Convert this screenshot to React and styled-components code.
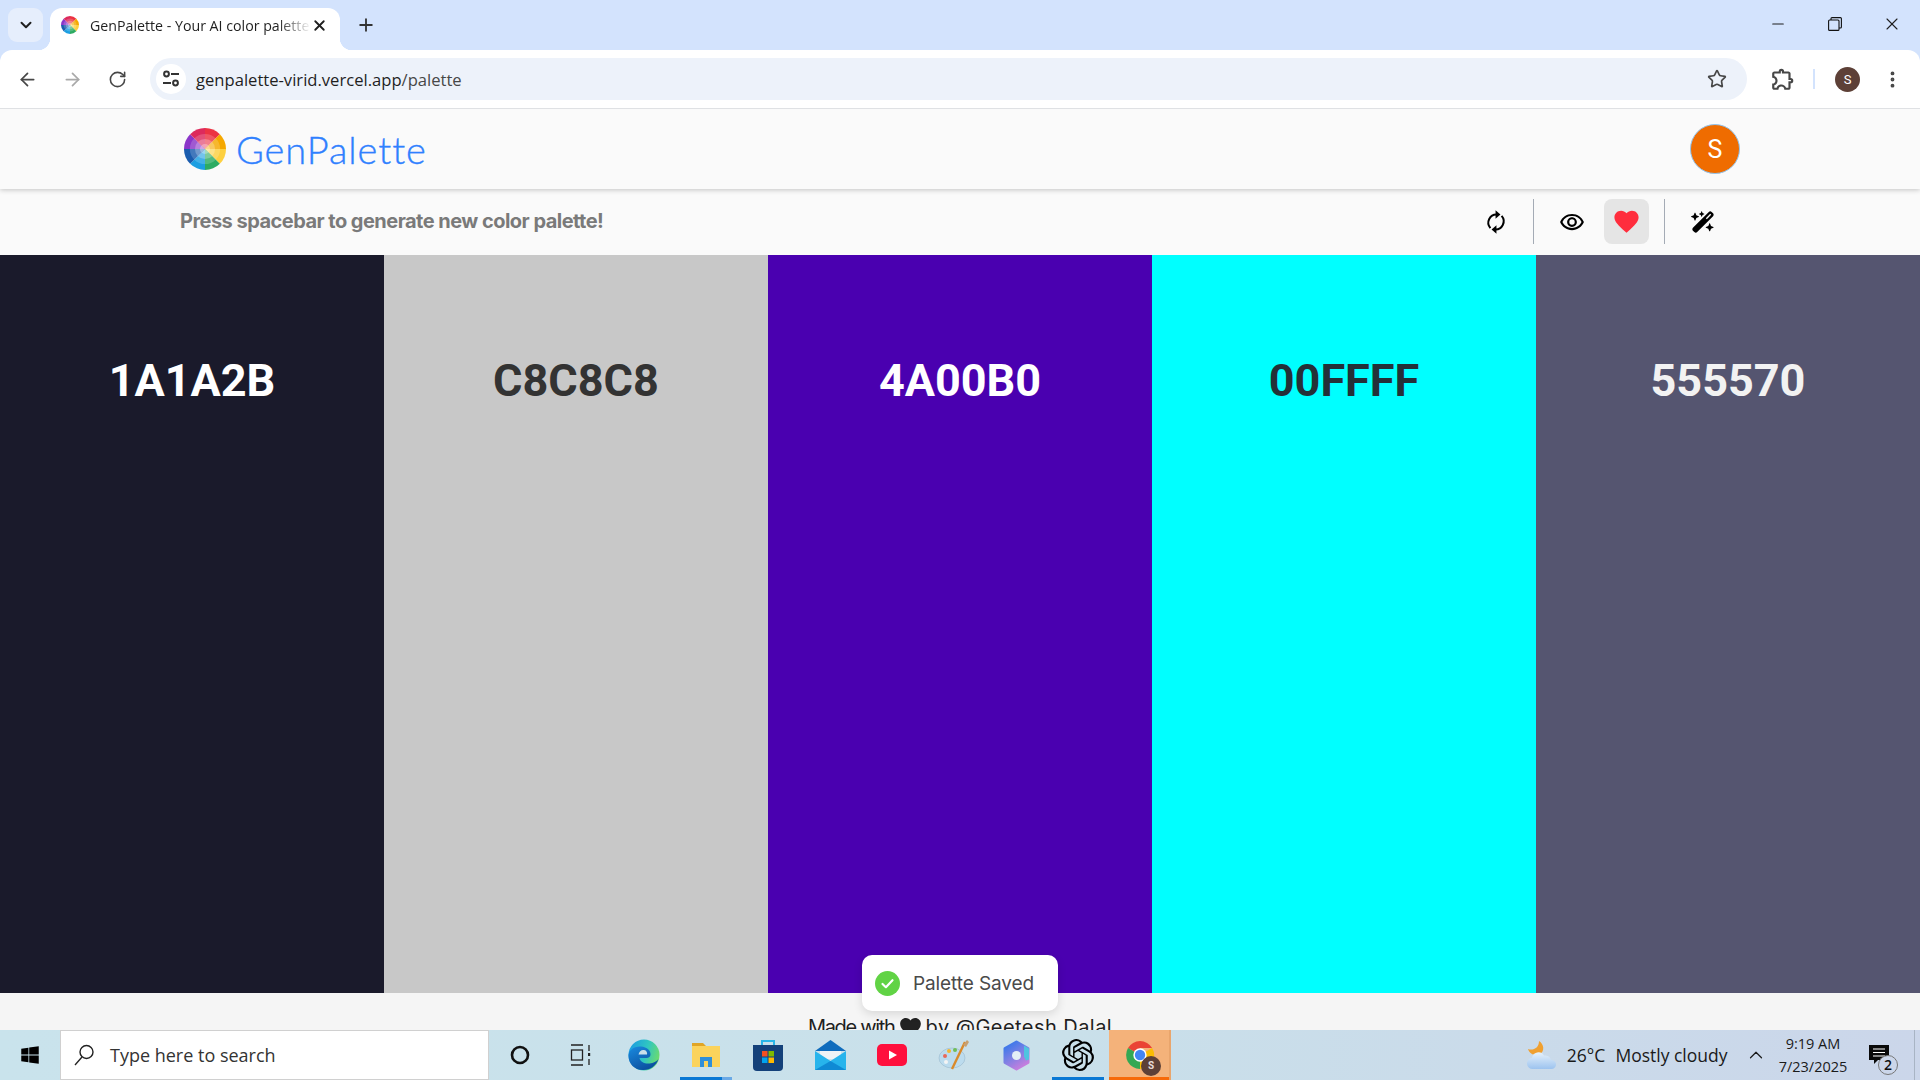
import styled, { createGlobalStyle } from "styled-components";
import { ArrowLeft, ArrowRight, RotateCw, ChevronDown, Plus, X, Minus, Star, EllipsisVertical, ChevronUp } from "lucide-react";
import { MdOutlineExtension, MdFavorite, MdOutlineRemoveRedEye } from "react-icons/md";
import { FaWandMagicSparkles, FaWindows } from "react-icons/fa6";
import { SiOpenai } from "react-icons/si";

const GlobalStyle = createGlobalStyle`
  html, body {
    margin: 0;
    height: 100%;
    overflow: hidden;
    background: #f5f5f5;
    font-family: "Inter", "Liberation Sans", sans-serif;
  }
  #root { height: 100%; }
`;

const palette = [
  { hex: "1A1A2B", text: "#ffffff" },
  { hex: "C8C8C8", text: "#333333" },
  { hex: "4A00B0", text: "#ffffff" },
  { hex: "00FFFF", text: "#243038" },
  { hex: "555570", text: "#f2f2f2" },
];

const wheelColors = ["#ec3342", "#f5a800", "#fdd040", "#2dab62", "#1c9fe2", "#1a5cae", "#8b35c9", "#dd2a5c"];

const wedge = (r, i) => {
  const a0 = (i * 45 - 90) * (Math.PI / 180);
  const a1 = ((i + 1) * 45 - 90) * (Math.PI / 180);
  const p = (a) => `${(50 + r * Math.cos(a)).toFixed(2)} ${(50 + r * Math.sin(a)).toFixed(2)}`;
  return `M50 50L${p(a0)}A${r} ${r} 0 0 1 ${p(a1)}Z`;
};

const ColorWheel = ({ size }) => (
  <svg width={size} height={size} viewBox="0 0 100 100">
    {wheelColors.map((c, i) => (
      <g key={c}>
        <path d={wedge(50, i)} fill={c} />
        <path d={wedge(36, i)} fill="#ffffff" opacity="0.18" />
        <path d={wedge(24, i)} fill="#ffffff" opacity="0.25" />
        <path d={wedge(12, i)} fill="#ffffff" opacity="0.3" />
      </g>
    ))}
  </svg>
);

const Screen = styled.div`
  height: 100vh;
  display: flex;
  flex-direction: column;
  overflow: hidden;
`;

/* browser chrome */
const BrowserTop = styled.div`
  flex: none;
  background: #d3e3fd;
`;

const TabStrip = styled.div`
  height: 50px;
  display: flex;
  align-items: flex-end;
  padding-left: 8px;
`;

const TabSearch = styled.div`
  width: 35px;
  height: 34px;
  margin-bottom: 8px;
  border-radius: 9px;
  background: #e6eefc;
  color: #1f1f1f;
  display: flex;
  align-items: center;
  justify-content: center;
`;

const Tab = styled.div`
  width: 290px;
  height: 42px;
  margin-left: 7px;
  background: #ffffff;
  border-radius: 12px 12px 0 0;
  display: flex;
  align-items: center;
  padding: 0 12px 8px 11px;
  box-sizing: border-box;
  color: #1f1f1f;
  position: relative;

  &::before,
  &::after {
    content: "";
    position: absolute;
    bottom: 0;
    width: 12px;
    height: 12px;
  }
  &::before {
    left: -12px;
    background: radial-gradient(circle at 0 0, transparent 12px, #ffffff 12.5px);
  }
  &::after {
    right: -12px;
    background: radial-gradient(circle at 100% 0, transparent 12px, #ffffff 12.5px);
  }
`;

const TabTitle = styled.span`
  flex: 1;
  margin-left: 11px;
  font: 14.2px "Open Sans", sans-serif;
  white-space: nowrap;
  overflow: hidden;
  -webkit-mask-image: linear-gradient(to right, #000 85%, transparent);
  mask-image: linear-gradient(to right, #000 85%, transparent);
`;

const NewTab = styled.div`
  margin: 0 0 15px 16px;
  color: #333;
  display: flex;
`;

const WindowButtons = styled.div`
  margin-left: auto;
  align-self: flex-start;
  display: flex;
  height: 48px;
  align-items: center;
  color: #1f1f1f;
`;

const WindowButton = styled.div`
  width: 57px;
  display: flex;
  justify-content: center;
  align-items: center;
`;

const BrowserBar = styled.div`
  height: 58px;
  background: #ffffff;
  border-bottom: 1px solid #dfe1e4;
  border-radius: 12px 12px 0 0;
  display: flex;
  align-items: center;
  color: #474747;
  padding-left: 5px;
`;

const NavButton = styled.div`
  width: 45px;
  display: flex;
  justify-content: center;
  color: ${({ $dim }) => ($dim ? "#a9a9a9" : "#474747")};
`;

const AddressBar = styled.div`
  width: 1597px;
  height: 42px;
  margin-left: 10px;
  border-radius: 21px;
  background: #edf2fa;
  display: flex;
  align-items: center;
  padding: 0 20px 0 6px;
  box-sizing: border-box;
`;

const SiteInfo = styled.div`
  width: 30px;
  height: 30px;
  border-radius: 50%;
  background: #ffffff;
  display: flex;
  align-items: center;
  justify-content: center;
`;

const Url = styled.div`
  flex: 1;
  margin-left: 10px;
  font: 16.6px "Open Sans", sans-serif;
  color: #1f1f1f;
  span { color: #474747; }
`;

const BarIcons = styled.div`
  display: flex;
  align-items: center;
  flex: 1;
  padding-left: 23px;
`;

const BarSeparator = styled.div`
  width: 2px;
  height: 20px;
  background: #d3e3fd;
  margin: 0 20px 0 17px;
`;

const ChromeAvatar = styled.div`
  width: 25px;
  height: 25px;
  border-radius: 50%;
  background: #5d4037;
  color: #fff;
  font: 13px "Roboto", sans-serif;
  display: flex;
  align-items: center;
  justify-content: center;
  margin-right: 10px;
`;

/* page */
const Page = styled.main`
  flex: 1;
  min-height: 0;
  display: flex;
  flex-direction: column;
  position: relative;
  overflow: hidden;
`;

const Header = styled.header`
  height: 80px;
  flex: none;
  background: #fafafa;
  box-shadow: 0 1px 5px rgba(0, 0, 0, 0.22);
  display: flex;
  align-items: center;
  justify-content: space-between;
  padding: 0 180px 0 184px;
  position: relative;
  z-index: 1;
`;

const Brand = styled.div`
  display: flex;
  align-items: center;
  gap: 10px;
`;

const BrandName = styled.span`
  font: 300 38px "Lato", sans-serif;
  -webkit-text-stroke: 0.35px #2f80ff;
  color: #2f80ff;
  letter-spacing: 0.9px;
`;

const UserBadge = styled.div`
  width: 50px;
  height: 50px;
  box-sizing: border-box;
  border-radius: 50%;
  background: #ef6c00;
  border: 1px solid #90c4f0;
  color: #ffffff;
  font: 25px "Roboto", sans-serif;
  display: flex;
  align-items: center;
  justify-content: center;
`;

const ToolRow = styled.div`
  height: 66px;
  flex: none;
  background: #fafafa;
  display: flex;
  align-items: center;
  justify-content: space-between;
  padding: 0 195px 0 180px;
`;

const Hint = styled.p`
  margin: 0 0 2px;
  font-size: 20px;
  font-weight: 700;
  letter-spacing: -0.53px;
  color: #7a7a7a;
`;

const Tools = styled.div`
  display: flex;
  align-items: center;
  margin-bottom: 1px;
`;

const ToolButton = styled.button`
  width: 45px;
  height: 45px;
  padding: 0;
  border: 0;
  border-radius: 8px;
  margin-left: ${({ $gap }) => $gap || 0}px;
  background: ${({ $active }) => ($active ? "#e5e5e5" : "transparent")};
  color: #000;
  display: flex;
  align-items: center;
  justify-content: center;
`;

const ToolDivider = styled.div`
  width: 1px;
  height: 45px;
  margin: 0 15px;
  background: #a4abb5;
`;

const Columns = styled.section`
  height: 738px;
  flex: none;
  display: flex;
`;

const Column = styled.div`
  flex: 1;
  background: ${({ $bg }) => $bg};
  color: ${({ $fg }) => $fg};
  font: 700 45px/52px "Roboto", sans-serif;
  text-align: center;
  padding-top: 100px;
  box-sizing: border-box;
`;

const Footer = styled.footer`
  flex: 1;
  background: #f5f5f5;
  padding-top: 20px;
  text-align: center;
  font-size: 20px;
  line-height: 28px;
  color: #1f1f1f;
  svg { vertical-align: -3px; margin: 0 5px; }
`;

const FooterText = styled.span`
  letter-spacing: ${({ $spacing }) => $spacing}px;
`;

const Toast = styled.div`
  position: absolute;
  left: 862px;
  top: 846px;
  width: 196px;
  height: 56px;
  box-sizing: border-box;
  padding-left: 13px;
  display: flex;
  align-items: center;
  gap: 13px;
  background: #ffffff;
  border-radius: 10px;
  box-shadow: 0 3px 10px rgba(0, 0, 0, 0.12);
  font-size: 19px;
  letter-spacing: -0.1px;
  color: #4a4a4a;
`;

/* windows taskbar */
const Taskbar = styled.div`
  height: 50px;
  flex: none;
  display: flex;
  align-items: stretch;
  background: linear-gradient(to right, #c9e3ec, #c9e0ea 55%, #cbd6ea);
`;

const StartButton = styled.div`
  width: 60px;
  display: flex;
  align-items: center;
  justify-content: center;
`;

const SearchBox = styled.div`
  width: 429px;
  box-sizing: border-box;
  background: #ffffff;
  border: 1px solid #d0d0d0;
  display: flex;
  align-items: center;
  padding-left: 13px;
  gap: 16px;
  font: 18px "Open Sans", sans-serif;
  color: #333;
`;

const TaskSlot = styled.div`
  width: 62px;
  display: flex;
  align-items: center;
  justify-content: center;
  position: relative;
  background: ${({ $current }) => ($current ? "#f4b27a" : "transparent")};
  border-right: ${({ $current }) => ($current ? "2px solid #e9a56c" : "0")};
  box-sizing: border-box;
  &::after {
    content: "";
    display: ${({ $line }) => ($line ? "block" : "none")};
    position: absolute;
    left: ${({ $current }) => ($current ? 0 : 5)}px;
    right: ${({ $current }) => ($current ? 0 : 5)}px;
    bottom: 0;
    height: 3px;
    background: ${({ $line }) => $line};
  }
`;

const Tray = styled.div`
  margin-left: auto;
  margin-right: 5px;
  display: flex;
  align-items: center;
  padding-right: 5px;
  font: 17.5px "Open Sans", sans-serif;
  color: #1a1a1a;
  border-right: 1px solid #a8b4c4;
`;

const TrayText = styled.span`
  margin-left: ${({ $gap }) => $gap}px;
  white-space: nowrap;
`;

const Clock = styled.div`
  width: 90px;
  margin-left: 1px;
  text-align: center;
  font-size: 14.5px;
  line-height: 23px;
`;

const Notify = styled.div`
  width: 40px;
  height: 36px;
  margin-left: 11px;
  padding-top: 8px;
  box-sizing: border-box;
  position: relative;
`;

const NotifyCount = styled.span`
  position: absolute;
  left: 9px;
  top: 18px;
  width: 20px;
  height: 20px;
  box-sizing: border-box;
  border-radius: 50%;
  background: #cbd6ea;
  border: 1px solid #777;
  font: 600 14px/18px "Open Sans", sans-serif;
  text-align: center;
  color: #111;
`;

const TuneIcon = () => (
  <svg width="20" height="20" viewBox="0 0 20 20" fill="none" stroke="#333" strokeWidth="2">
    <circle cx="5.5" cy="5" r="2.4" />
    <path d="M10 5h8M2 14h8" />
    <circle cx="14.5" cy="14" r="2.4" />
  </svg>
);

const RestoreIcon = () => (
  <svg width="14" height="14" viewBox="0 0 14 14" fill="none" stroke="#111" strokeWidth="1.1">
    <rect x="0.6" y="3" width="10.4" height="10.4" rx="1" />
    <path d="M3 3V1.6a1 1 0 0 1 1-1h8.4a1 1 0 0 1 1 1V10a1 1 0 0 1-1 1H11" />
  </svg>
);

const SyncIcon = () => (
  <svg width="28" height="28" viewBox="0 0 24 24" fill="none" stroke="#000" strokeWidth="1.7">
    <path d="M13 5.6A7 7 0 0 0 7.2 17.2" />
    <path d="M11 18.4A7 7 0 0 0 16.8 6.800" />
    <path d="M11.6 2l4.2 3.600-4.200 3.600z" fill="#000" stroke="none" />
    <path d="M12.4 22l-4.200-3.600 4.200-3.600z" fill="#000" stroke="none" />
  </svg>
);

const CheckCircle = () => (
  <svg width="25" height="25" viewBox="0 0 25 25">
    <circle cx="12.5" cy="12.5" r="12.5" fill="#61d345" />
    <path d="M7.5 13l3.4 3.2 6.6-7" fill="none" stroke="#fff" strokeWidth="2.2" strokeLinecap="round" strokeLinejoin="round" />
  </svg>
);

const HeartBlack = () => (
  <svg width="21" height="19" viewBox="0 0 24 22" fill="#222">
    <path d="M12 21.5C5 16 0 12 0 6.8 0 3 3 0 6.6 0 9 0 11 1.2 12 3c1-1.8 3-3 5.4-3C21 0 24 3 24 6.8 24 12 19 16 12 21.5z" />
  </svg>
);

const SearchGlass = () => (
  <svg width="20" height="22" viewBox="0 0 20 22" fill="none" stroke="#222" strokeWidth="1.4">
    <circle cx="12.5" cy="8" r="6.5" />
    <path d="M8 13L1 21" />
  </svg>
);

const TaskViewIcon = () => (
  <svg width="24" height="24" viewBox="0 0 24 24" fill="none" stroke="#222" strokeWidth="1.3">
    <path d="M1 2h12M1 22h12" />
    <rect x="1.5" y="7" width="11" height="10" />
    <path d="M19 2v6M19 16v6" />
    <rect x="18" y="10" width="2.2" height="3" fill="#222" stroke="none" />
  </svg>
);

const EdgeIcon = () => (
  <svg width="32" height="32" viewBox="0 0 32 32">
    <defs>
      <linearGradient id="edgeTop" x1="0" y1="0.3" x2="1" y2="0.6">
        <stop offset="0" stopColor="#1b9de2" />
        <stop offset="0.55" stopColor="#30c6c0" />
        <stop offset="1" stopColor="#6fdc6a" />
      </linearGradient>
      <linearGradient id="edgeLow" x1="0" y1="0" x2="0.6" y2="1">
        <stop offset="0" stopColor="#1a8be0" />
        <stop offset="1" stopColor="#0b4f9e" />
      </linearGradient>
    </defs>
    <circle cx="16" cy="16" r="15.5" fill="url(#edgeTop)" />
    <path d="M.5 17C.5 11 6 7 13 7.5c6 .5 10 4 9.5 8.5-.3 2-2 3-4 3h-7c.5 3.5 5 6 10 5.5 4-.4 7-2 9-4.5-2 6.5-8 11-15 11C7 31.5.5 25 .5 17z" fill="url(#edgeLow)" />
    <path d="M10.5 15.5c.5-3 3-5 5.5-4.5 2.5.4 3.5 2.5 3 4.5z" fill="#c9e0ea" />
  </svg>
);

const FolderIcon = () => (
  <svg width="30" height="28" viewBox="0 0 30 28">
    <path d="M1 2h11l3 3H1z" fill="#e0a526" />
    <rect x="1" y="5" width="28" height="21" fill="#fbd35c" />
    <path d="M9 26v-10h12v10h-4v-6h-4v6z" fill="#2f8fd8" />
  </svg>
);

const StoreIcon = () => (
  <svg width="30" height="32" viewBox="0 0 30 32">
    <path d="M9 6V2h12v4" fill="none" stroke="#29b6e8" strokeWidth="2" />
    <path d="M0 6h30v22a4 4 0 0 1-4 4H4a4 4 0 0 1-4-4z" fill="#14417a" />
    <rect x="9" y="12" width="5.5" height="5.5" fill="#f25022" />
    <rect x="15.5" y="12" width="5.5" height="5.5" fill="#7fba00" />
    <rect x="9" y="18.5" width="5.5" height="5.5" fill="#00a4ef" />
    <rect x="15.5" y="18.5" width="5.5" height="5.5" fill="#ffb900" />
  </svg>
);

const MailIcon = () => (
  <svg width="31" height="30" viewBox="0 0 31 30">
    <path d="M0 11L15.5 0 31 11z" fill="#0f6cbd" />
    <path d="M5 11h21v8H5z" fill="#eef3f6" />
    <path d="M0 11l15.5 10L31 11v19H0z" fill="#27b4ec" />
    <path d="M0 30l15.5-9L31 30z" fill="#0f8ad4" />
  </svg>
);

const YoutubeIcon = () => (
  <svg width="30" height="22" viewBox="0 0 30 22">
    <rect width="30" height="22" rx="5" fill="#ff0f3d" />
    <path d="M12 6.5l8 4.5-8 4.5z" fill="#fff" />
  </svg>
);

const PaintIcon = () => (
  <svg width="32" height="32" viewBox="0 0 32 32">
    <ellipse cx="14" cy="19" rx="13" ry="10" fill="#bcdcee" stroke="#9ab8cc" strokeWidth="0.6" />
    <circle cx="7" cy="17" r="2" fill="#e86a5a" />
    <circle cx="11" cy="12" r="2" fill="#f2b632" />
    <circle cx="17" cy="11" r="2" fill="#6fbf55" />
    <circle cx="8" cy="23" r="2" fill="#f4f4f4" />
    <path d="M27 3L14 30" stroke="#d98a2b" strokeWidth="2.4" />
    <path d="M25 6l4-5 2 2-3 5z" fill="#c8a070" />
  </svg>
);

const CopilotIcon = () => (
  <svg width="27" height="31" viewBox="0 0 27 31">
    <defs>
      <linearGradient id="copilotFill" x1="0.1" y1="0.1" x2="0.6" y2="1">
        <stop offset="0" stopColor="#3b78ea" />
        <stop offset="0.5" stopColor="#7d80e4" />
        <stop offset="1" stopColor="#c47ede" />
      </linearGradient>
    </defs>
    <path d="M13.5 2L25 8.5v14L13.5 29 2 22.5v-14z" fill="url(#copilotFill)" stroke="url(#copilotFill)" strokeWidth="3" strokeLinejoin="round" />
    <path d="M21 5.5L26 8.5v11l-3 1-2-4z" fill="#4fc4e0" />
    <circle cx="13.5" cy="15.5" r="4.5" fill="#e4eef6" />
  </svg>
);

const ChromeLogo = () => (
  <ChromeMark>
    <svg width="32" height="32" viewBox="0 0 48 48">
      <path d="M24 24L6 13.5A21 21 0 0 1 42.2 13.5H24z" fill="#ea4335" />
      <path d="M24 24L42.2 13.5A21 21 0 0 1 24 45z" fill="#fbbc04" />
      <path d="M24 24V45A21 21 0 0 1 6 13.5z" fill="#34a853" />
      <circle cx="24" cy="24" r="10" fill="#fff" />
      <circle cx="24" cy="24" r="7.8" fill="#4285f4" />
    </svg>
    <ChromeBadge>S</ChromeBadge>
  </ChromeMark>
);

const ChromeMark = styled.div`
  position: relative;
  width: 32px;
  height: 32px;
  margin-left: 2px;
  svg { display: block; }
`;

const ChromeBadge = styled.span`
  position: absolute;
  right: -5px;
  bottom: -5px;
  width: 20px;
  height: 20px;
  border-radius: 50%;
  background: #5d4037;
  color: #e8dcd8;
  font: 700 10px/20px "Roboto", sans-serif;
  text-align: center;
`;

const WeatherIcon = () => (
  <svg width="31" height="30" viewBox="0 0 31 30">
    <defs>
      <linearGradient id="cloudFill" x1="0" y1="0" x2="0" y2="1">
        <stop offset="0" stopColor="#e6f1fb" />
        <stop offset="1" stopColor="#9cc3ef" />
      </linearGradient>
    </defs>
    <path d="M1 9c5 2 11-1 11-8 5 3 6 10 1 13-4 2-10 1-12-5z" fill="#f0a030" />
    <path d="M6 29a5.5 5.5 0 0 1-1-11 6.5 6.5 0 0 1 12-2.5 6 6 0 0 1 7 4.5 4.5 4.5 0 0 1 1 9z" fill="url(#cloudFill)" />
  </svg>
);

const NotifyBubble = () => (
  <svg width="20" height="20" viewBox="0 0 20 20">
    <path d="M0 0h20v15H9l-4 4v-4H0z" fill="#0a0a0a" />
    <path d="M4 4h12M4 7.5h12M4 11h12" stroke="#fff" strokeWidth="1.1" />
  </svg>
);

const App = () => {
  return (
    <Screen>
      <GlobalStyle />
      <BrowserTop>
        <TabStrip>
          <TabSearch><ChevronDown size={18} strokeWidth={2.6} /></TabSearch>
          <Tab>
            <ColorWheel size={18} />
            <TabTitle>GenPalette - Your AI color palette generator</TabTitle>
            <X size={17} strokeWidth={2.6} />
          </Tab>
          <NewTab><Plus size={20} strokeWidth={2.2} /></NewTab>
          <WindowButtons>
            <WindowButton><Minus size={18} strokeWidth={1.5} /></WindowButton>
            <WindowButton><RestoreIcon /></WindowButton>
            <WindowButton><X size={20} strokeWidth={1.3} /></WindowButton>
          </WindowButtons>
        </TabStrip>

        <BrowserBar>
          <NavButton><ArrowLeft size={21} /></NavButton>
          <NavButton $dim><ArrowRight size={21} /></NavButton>
          <NavButton><RotateCw size={19} /></NavButton>
          <AddressBar>
            <SiteInfo><TuneIcon /></SiteInfo>
            <Url>genpalette-virid.vercel.app<span>/palette</span></Url>
            <Star size={20} strokeWidth={2} />
          </AddressBar>
          <BarIcons>
            <MdOutlineExtension size={26} />
            <BarSeparator />
            <ChromeAvatar>S</ChromeAvatar>
            <NavButton><EllipsisVertical size={21} strokeWidth={2.4} /></NavButton>
          </BarIcons>
        </BrowserBar>
      </BrowserTop>

      <Page>
        <Header>
          <Brand>
            <ColorWheel size={42} />
            <BrandName>GenPalette</BrandName>
          </Brand>
          <UserBadge>S</UserBadge>
        </Header>

        <ToolRow>
          <Hint>Press spacebar to generate new color palette!</Hint>
          <Tools>
            <ToolButton><SyncIcon /></ToolButton>
            <ToolDivider />
            <ToolButton><MdOutlineRemoveRedEye size={26} /></ToolButton>
            <ToolButton $active $gap={10}><MdFavorite size={29} color="#ff2d3d" /></ToolButton>
            <ToolDivider />
            <ToolButton><FaWandMagicSparkles size={24} /></ToolButton>
          </Tools>
        </ToolRow>

        <Columns>
          {palette.map((c) => (
            <Column key={c.hex} $bg={`#${c.hex}`} $fg={c.text}>{c.hex}</Column>
          ))}
        </Columns>

        <Footer>
          <FooterText $spacing={-1.3}>Made with</FooterText>
          <HeartBlack />
          <FooterText $spacing={0.45}>by @Geetesh Dalal</FooterText>
        </Footer>

        <Toast><CheckCircle />Palette Saved</Toast>
      </Page>

      <Taskbar>
        <StartButton><FaWindows size={20} color="#000" /></StartButton>
        <SearchBox><SearchGlass />Type here to search</SearchBox>
        <TaskSlot>
          <svg width="20" height="20" viewBox="0 0 20 20" fill="none" stroke="#111" strokeWidth="2.6"><circle cx="10" cy="10" r="8" /></svg>
        </TaskSlot>
        <TaskSlot><TaskViewIcon /></TaskSlot>
        <TaskSlot><EdgeIcon /></TaskSlot>
        <TaskSlot $line="linear-gradient(to right, #0a78d4 80%, #6aa9e6 80%)"><FolderIcon /></TaskSlot>
        <TaskSlot><StoreIcon /></TaskSlot>
        <TaskSlot><MailIcon /></TaskSlot>
        <TaskSlot><YoutubeIcon /></TaskSlot>
        <TaskSlot><PaintIcon /></TaskSlot>
        <TaskSlot><CopilotIcon /></TaskSlot>
        <TaskSlot $line="#0a78d4"><SiOpenai size={32} color="#000" /></TaskSlot>
        <TaskSlot $current $line="#f76a0a"><ChromeLogo /></TaskSlot>

        <Tray>
          <WeatherIcon />
          <TrayText $gap={9}>26°C</TrayText>
          <TrayText $gap={10}>Mostly cloudy</TrayText>
          <TrayText $gap={17.5}><ChevronUp size={22} strokeWidth={1.3} style={{ display: "block" }} /></TrayText>
          <Clock>9:19 AM<br />7/23/2025</Clock>
          <Notify>
            <NotifyBubble />
            <NotifyCount>2</NotifyCount>
          </Notify>
        </Tray>
      </Taskbar>
    </Screen>
  );
};

export default App;
